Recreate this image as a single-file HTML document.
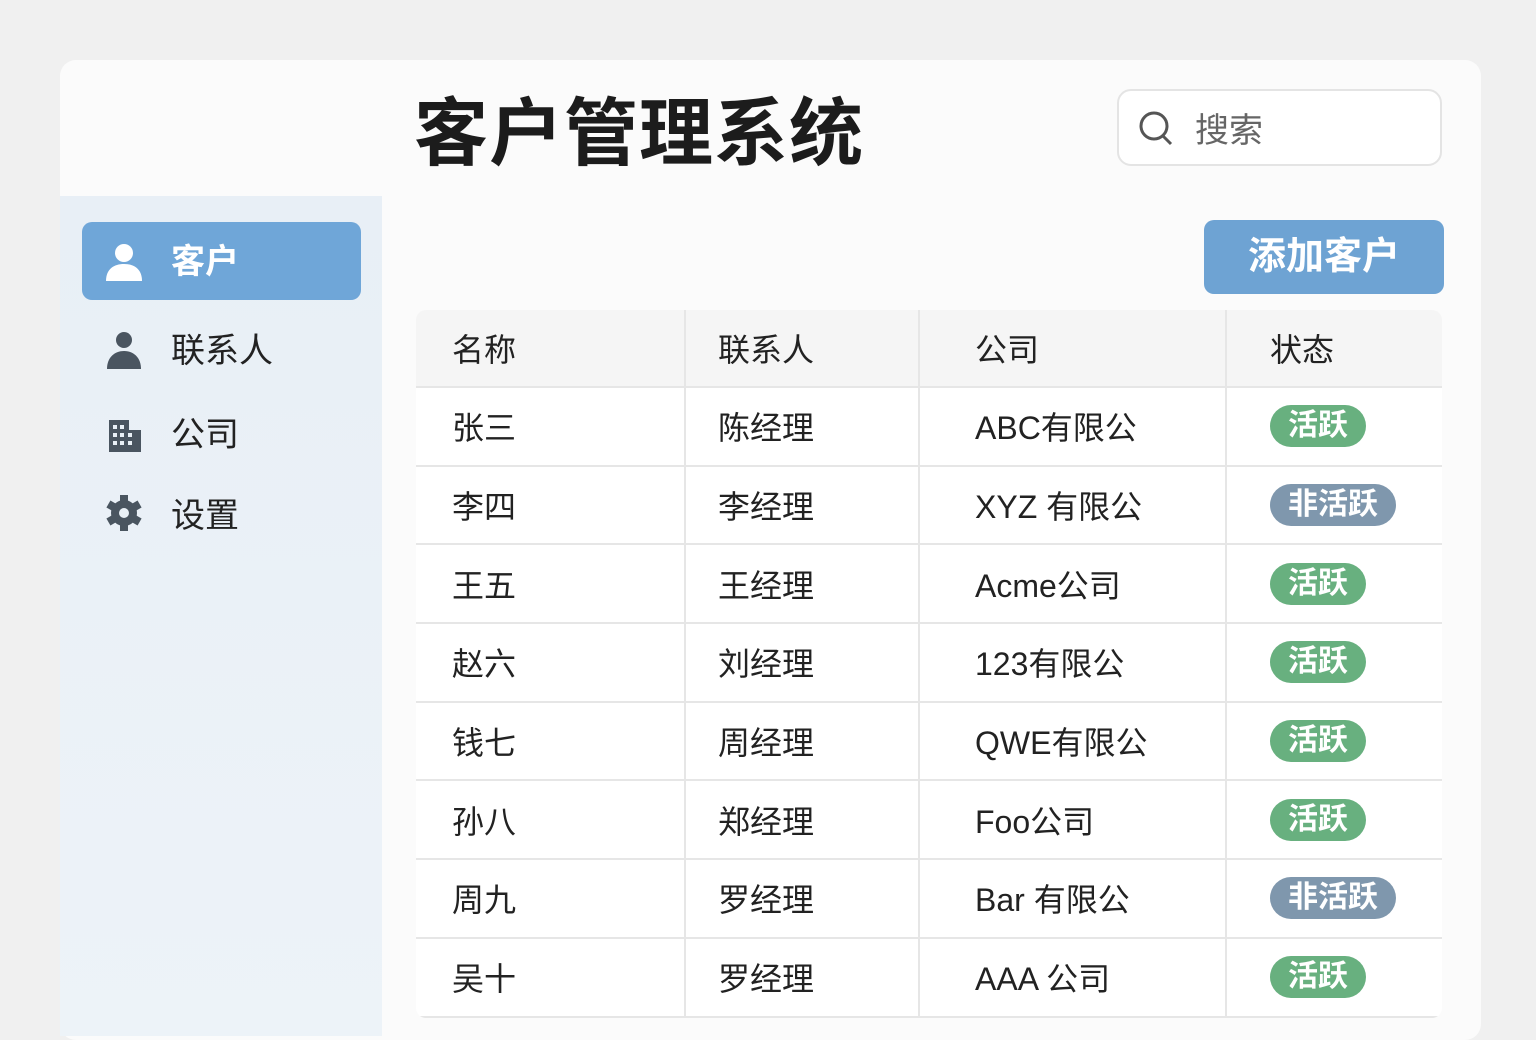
<!DOCTYPE html>
<html><head><meta charset="utf-8"><style>
*{margin:0;padding:0;box-sizing:border-box}
body{width:1536px;height:1024px;background:#f0f0f0;font-family:"Liberation Sans","Noto Sans CJK SC",sans-serif;position:relative;overflow:hidden;color:#222}
.card{position:absolute;left:60px;top:60px;width:1421px;height:980px;background:#fbfbfb;border-radius:16px}
.side{position:absolute;left:60px;top:196px;width:322px;height:840px;background:linear-gradient(#e8eff6,#edf3f8)}
h1{position:absolute;left:414px;top:74px;font-size:74px;font-weight:bold;letter-spacing:1px;color:#1c1c1c}
.search{position:absolute;left:1117px;top:89px;width:325px;height:77px;border:2px solid #e4e4e4;border-radius:14px;background:#fff}
.search span{position:absolute;left:76px;top:12px;font-size:34px;color:#666}
.btn{position:absolute;left:1204px;top:220px;width:240px;height:74px;background:#6ea3d3;border-radius:10px;color:#fff;font-size:38px;font-weight:bold;text-align:center;line-height:74px}
.nav{position:absolute;left:82px;width:279px;height:78px;font-size:34px;line-height:80px}
.nav span{position:absolute;left:89px}
.nav svg{position:absolute;left:22px;top:19px}
.act{background:#6fa6d8;border-radius:10px;color:#fff;font-weight:bold}
table{position:absolute;left:416px;top:310px;width:1026px;border-collapse:collapse;background:#fff;font-size:32px;border-radius:10px;overflow:hidden;table-layout:fixed}
td,th{height:78.7px;text-align:left;font-weight:normal;border-right:2px solid #e6e6e6;border-bottom:2px solid #e6e6e6;padding-left:36px}
td:nth-child(2),th:nth-child(2){padding-left:32px}
td:nth-child(3),th:nth-child(3){padding-left:55px}
th{background:#f5f5f5;height:77px}
td:last-child,th:last-child{border-right:none;padding-left:43px}
.g,.n{display:inline-block;height:42px;line-height:42px;border-radius:21px;color:#fff;font-size:30px;padding:0 18px;font-weight:bold;position:relative;top:0}
.g{background:#68b07f}.n{background:#7f97ad}
</style></head><body>
<div class="card"></div><div class="side"></div>
<h1>客户管理系统</h1>
<div class="search"><svg style="position:absolute;left:18px;top:18px" width="40" height="40" viewBox="0 0 40 40"><circle cx="17" cy="17" r="13" fill="none" stroke="#555" stroke-width="3"/><line x1="26" y1="27" x2="34" y2="35" stroke="#555" stroke-width="3"/></svg><span>搜索</span></div>
<div class="btn">添加客户</div>
<div class="nav act" style="top:222px"><svg width="40" height="40" viewBox="0 0 40 40"><circle cx="20" cy="12" r="9" fill="#fff"/><path d="M2 40C2 28 10 23 20 23S38 28 38 40Z" fill="#fff"/></svg><span>客户</span></div>
<div class="nav" style="top:311px"><svg width="40" height="40" viewBox="0 0 40 40"><circle cx="20" cy="10" r="8" fill="#4a5560"/><path d="M3 39C3 27 11 21 20 21S37 27 37 39Z" fill="#4a5560"/></svg><span>联系人</span></div>
<div class="nav" style="top:395px"><svg width="40" height="40" viewBox="0 0 40 40"><path d="M5 6h20v10h12v22H5Z" fill="#4a5560"/><g fill="#e9f0f6"><rect x="9" y="11" width="4" height="4"/><rect x="16" y="11" width="4" height="4"/><rect x="9" y="19" width="4" height="4"/><rect x="16" y="19" width="4" height="4"/><rect x="24" y="19" width="4" height="4"/><rect x="9" y="27" width="4" height="4"/><rect x="16" y="27" width="4" height="4"/><rect x="24" y="27" width="4" height="4"/></g></svg><span>公司</span></div>
<div class="nav" style="top:476px"><svg width="40" height="40" viewBox="0 0 40 40"><g fill="#4a5560" transform="translate(20 18)"><circle r="13"/><rect x="-4" y="-18" width="8" height="36"/><rect x="-4" y="-18" width="8" height="36" transform="rotate(60)"/><rect x="-4" y="-18" width="8" height="36" transform="rotate(120)"/></g><circle cx="20" cy="18" r="5" fill="#e9f0f6"/></svg><span>设置</span></div>
<table>
<colgroup><col style="width:269px"><col style="width:234px"><col style="width:307px"><col></colgroup>
<tr><th>名称</th><th>联系人</th><th>公司</th><th>状态</th></tr>
<tr><td>张三</td><td>陈经理</td><td>ABC有限公</td><td><span class="g">活跃</span></td></tr>
<tr><td>李四</td><td>李经理</td><td>XYZ 有限公</td><td><span class="n">非活跃</span></td></tr>
<tr><td>王五</td><td>王经理</td><td>Acme公司</td><td><span class="g">活跃</span></td></tr>
<tr><td>赵六</td><td>刘经理</td><td>123有限公</td><td><span class="g">活跃</span></td></tr>
<tr><td>钱七</td><td>周经理</td><td>QWE有限公</td><td><span class="g">活跃</span></td></tr>
<tr><td>孙八</td><td>郑经理</td><td>Foo公司</td><td><span class="g">活跃</span></td></tr>
<tr><td>周九</td><td>罗经理</td><td>Bar 有限公</td><td><span class="n">非活跃</span></td></tr>
<tr><td>吴十</td><td>罗经理</td><td>AAA 公司</td><td><span class="g">活跃</span></td></tr>
</table>
</body></html>
